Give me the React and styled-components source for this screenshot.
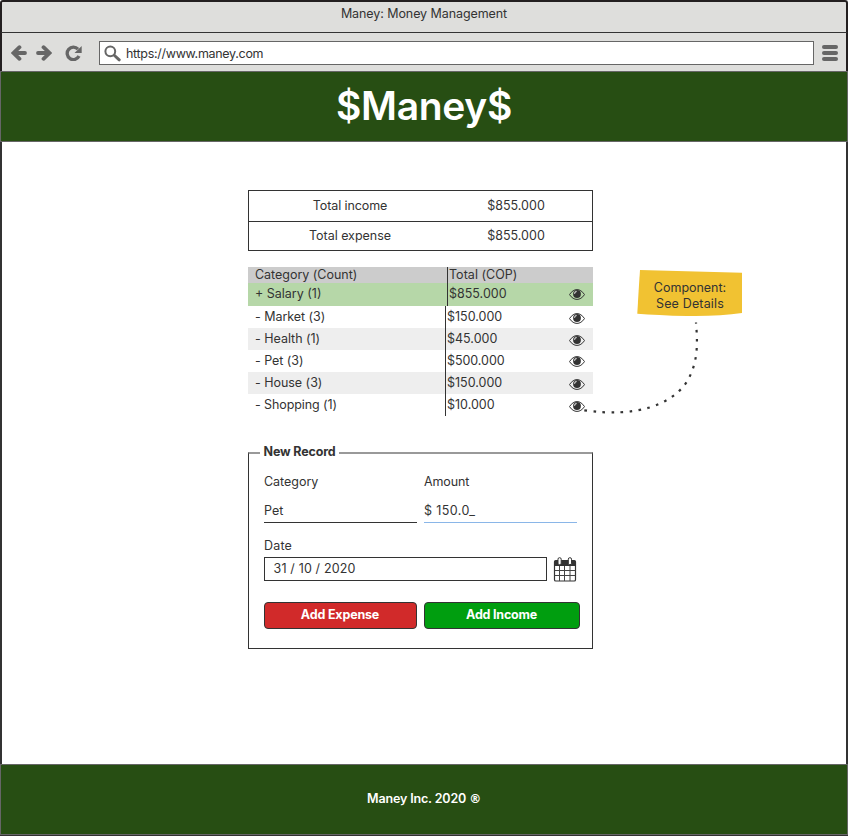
import React from "react";
import styled, { createGlobalStyle } from "styled-components";

const GlobalStyle = createGlobalStyle`
  *, *::before, *::after { box-sizing: border-box; }
  body { margin: 0; background: #fff; }
`;

const Window = styled.div`
  position: relative;
  display: flex;
  flex-direction: column;
  width: 848px;
  height: 836px;
  overflow: hidden;
  background: #fff;
  color: #333;
  font: 400 12.5px/16px Inter, "Open Sans", sans-serif;
`;

const Text = styled.span`
  letter-spacing: ${(p) => p.$ls || 0}px;
  white-space: pre;
`;

const TitleBar = styled.div`
  height: 33px;
  padding-top: 4px;
  text-align: center;
  background: #dededc;
  border: 2px solid #231f20;
  border-bottom: 1px solid #333;
  border-radius: 3px 3px 0 0;
`;

const Toolbar = styled.div`
  display: flex;
  align-items: flex-start;
  height: 38px;
  padding: 8px 7px 0 9px;
  background: #dededc;
  border: solid #231f20;
  border-width: 0 2px;
`;

const NavIcon = styled.svg`
  flex: none;
  width: ${(p) => p.$w}px;
  height: 16px;
  margin: 4px ${(p) => p.$gap}px 0 0;
`;

const AddressBar = styled.div`
  display: flex;
  align-items: center;
  width: 715px;
  height: 24px;
  margin-right: 8px;
  padding: 1px 0 0 4px;
  background: #fff;
  border: 1px solid #666;
`;

const SearchIcon = styled.svg`
  width: 17px;
  height: 17px;
  margin-right: 5px;
`;

const MenuButton = styled.div`
  display: flex;
  flex-direction: column;
  gap: 2px;
  width: 16px;
  padding-top: 4px;
`;

const MenuLine = styled.span`
  height: 4px;
  border-radius: 2px;
  background: #666;
`;

const Header = styled.header`
  height: 71px;
  padding-top: 10px;
  text-align: center;
  color: #fff;
  background: #274e13;
  border: 1px solid #666;
  font-size: 39px;
  font-weight: 600;
  line-height: 48px;
`;

const Main = styled.main`
  flex: 1;
  display: flex;
  flex-direction: column;
  padding: 48px 0 0 246px;
  border: solid #333;
  border-width: 0 2px;
`;

const Totals = styled.div`
  width: 345px;
  border: 1px solid #333;
`;

const TotalsRow = styled.div`
  display: grid;
  grid-template-columns: 202px 130px;
  align-items: center;
  text-align: center;
  height: ${(p) => p.$h}px;
  & + & { border-top: 1px solid #333; }
`;

const Categories = styled.div`
  width: 345px;
  margin-top: 16px;
`;

const CategoryRow = styled.div`
  display: grid;
  grid-template-columns: ${(p) => p.$split}px 1fr 24px;
  height: ${(p) => p.$h}px;
  background: ${(p) => p.$bg};
`;

const NameCell = styled.div`
  padding: ${(p) => p.$top}px 0 0 7px;
`;

const AmountCell = styled.div`
  padding: ${(p) => p.$top}px 0 0 1px;
  border-left: 1px solid #333;
`;

const EyeSvg = styled.svg`
  width: 16px;
  height: 11px;
  margin-top: ${(p) => p.$top}px;
`;

const Form = styled.fieldset`
  width: 345px;
  height: 204px;
  min-width: 0;
  margin: 29px 0 0;
  padding: 13px 12px 0 11px;
  border: 1px solid #333;
  border-top: 2px solid #999;
`;

const Legend = styled.legend`
  height: 16px;
  padding: 0 3px 0 3.5px;
  font-weight: 700;
  line-height: 14px;
`;

const Fields = styled.div`
  display: grid;
  grid-template-columns: 153px 153px;
  column-gap: 7px;
  margin-left: 4px;
`;

const Field = styled.label`
  display: flex;
  flex-direction: column;
  height: 49px;
  gap: 13px;
  border-bottom: 1px solid ${(p) => p.$line};
`;

const DateField = styled.div`
  display: grid;
  grid-template-columns: 283px 24px;
  column-gap: 6px;
  margin: 15px 0 0 4px;
`;

const DateLabel = styled.label`
  grid-column: 1 / -1;
  height: 19px;
`;

const DateInput = styled.div`
  height: 24px;
  padding: 3px 0 0 8.5px;
  border: 1px solid #333;
`;

const CalendarSvg = styled.svg`
  width: 24px;
  height: 25px;
`;

const Actions = styled.div`
  display: grid;
  grid-template-columns: 153px 156px;
  column-gap: 7px;
  margin: 20px 0 0 4px;
`;

const Button = styled.button`
  display: block;
  height: 27px;
  padding: 0 1px 1px 0;
  color: #fff;
  background: ${(p) => p.$bg};
  border: 1px solid #333;
  border-radius: 4px;
  font: 700 12.5px/16px Inter, sans-serif;
`;

const Footer = styled.footer`
  height: 71px;
  padding-top: 26px;
  text-align: center;
  color: #fff;
  background: #274e13;
  border: 1px solid #666;
  font-weight: 600;
`;

const Registered = styled.span`
  font: 700 12px/10px "DejaVu Sans", sans-serif;
`;

const WindowEdge = styled.div`
  height: 1px;
  background: #333;
`;

const Note = styled.aside`
  position: absolute;
  left: 637px;
  top: 269px;
  isolation: isolate;
  width: 106px;
  height: 48px;
  padding-top: 11px;
  display: flex;
  flex-direction: column;
  align-items: center;
`;

const NotePaper = styled.svg`
  position: absolute;
  inset: 0;
  z-index: -1;
`;

const Connector = styled.svg`
  position: absolute;
  left: 580px;
  top: 318px;
`;

const Eye = ({ top }) => (
  <EyeSvg viewBox="0 0 16 11" $top={top}>
    <path d="M.5 5.6C2.8 2.1 5.3.6 8 .6s5.2 1.5 7.5 5C13.200 9 10.700 10.400 8 10.400S2.800 9 .5 5.600Z" fill="none" stroke="#333" strokeWidth="1" />
    <circle cx="8" cy="5" r="3.900" fill="#333" />
    <path d="M5.500 4.700C5.600 3.400 6.400 2.500 7.600 2.300" fill="none" stroke="#ddd" strokeWidth="1.200" />
  </EyeSvg>
);

const Calendar = () => (
  <CalendarSvg viewBox="0 0 24 25">
    <rect x="1.500" y="3.500" width="21" height="20.500" rx="1.300" fill="#fff" stroke="#333" strokeWidth="1.200" />
    <path d="M1.500 9V4.500q0-1 1-1h19q1 0 1 1V9Z" fill="#333" />
    <path d="M6.500 9v15M11.500 9v15M17 9v15M1.500 13.500h21M1.500 18.500h21" stroke="#444" strokeWidth="1" />
    <rect x="5" y=".700" width="3.200" height="7" rx="1.500" fill="#fff" stroke="#333" />
    <rect x="15.300" y=".700" width="3.200" height="7" rx="1.500" fill="#fff" stroke="#333" />
  </CalendarSvg>
);

const ROWS = [
  { name: "Category (Count)", nls: -0.02, amount: "Total (COP)", als: 0.03, h: 16, split: 199, bg: "#ccc", top: 0 },
  { name: "+ Salary (1)", nls: 0, amount: "$855.000", als: 0, h: 23, split: 199, bg: "#b6d7a8", top: 3, eye: 6 },
  { name: "- Market (3)", nls: -0.04, amount: "$150.000", als: 0, h: 22, split: 197, bg: "#fff", top: 3, eye: 7 },
  { name: "- Health (1)", nls: -0.02, amount: "$45.000", als: 0, h: 22, split: 197, bg: "#eee", top: 3, eye: 7 },
  { name: "- Pet (3)", nls: -0.04, amount: "$500.000", als: -0.06, h: 22, split: 197, bg: "#fff", top: 3, eye: 6 },
  { name: "- House (3)", nls: -0.03, amount: "$150.000", als: 0, h: 22, split: 197, bg: "#eee", top: 3, eye: 7 },
  { name: "- Shopping (1)", nls: -0.1, amount: "$10.000", als: 0, h: 22, split: 197, bg: "#fff", top: 3, eye: 7 },
];

export default function App() {
  return (
    <>
      <GlobalStyle />
      <Window>
        <TitleBar><Text $ls={-0.08}>Maney: Money Management</Text></TitleBar>
        <Toolbar>
          <NavIcon viewBox="0 0 16 16" $w={16} $gap={9}>
            <path d="M14 8H3M8.500 2.200 2.500 8l6 5.800" fill="none" stroke="#666" strokeWidth="3.800" strokeLinecap="round" strokeLinejoin="miter" />
          </NavIcon>
          <NavIcon viewBox="0 0 16 16" $w={16} $gap={13}>
            <path d="M2 8h11M7.500 2.200l6 5.800-6 5.800" fill="none" stroke="#666" strokeWidth="3.800" strokeLinecap="round" strokeLinejoin="miter" />
          </NavIcon>
          <NavIcon viewBox="0 0 17 16" $w={17} $gap={17}>
            <path d="M13 4.200A6.200 6.200 0 1 0 14 11" fill="none" stroke="#666" strokeWidth="3.300" />
            <path d="M16.700 1v7H9.500Z" fill="#666" />
          </NavIcon>
          <AddressBar>
            <SearchIcon viewBox="0 0 17 17">
              <circle cx="6.300" cy="6.300" r="4.900" fill="none" stroke="#666" strokeWidth="2" />
              <path d="m10.500 10.500 4.700 4.300" stroke="#666" strokeWidth="3" strokeLinecap="round" />
            </SearchIcon>
            <Text $ls={-0.3}>https://www.maney.com</Text>
          </AddressBar>
          <MenuButton><MenuLine /><MenuLine /><MenuLine /></MenuButton>
        </Toolbar>
        <Header><Text $ls={-0.3}>$Maney$</Text></Header>
        <Main>
          <Totals>
            <TotalsRow $h={30}>
              <Text $ls={-0.1}>Total income</Text>
              <Text $ls={0}>$855.000</Text>
            </TotalsRow>
            <TotalsRow $h={29}>
              <Text $ls={-0.02}>Total expense</Text>
              <Text $ls={0}>$855.000</Text>
            </TotalsRow>
          </Totals>
          <Categories>
            {ROWS.map((r) => (
              <CategoryRow key={r.name} $h={r.h} $split={r.split} $bg={r.bg}>
                <NameCell $top={r.top}><Text $ls={r.nls}>{r.name}</Text></NameCell>
                <AmountCell $top={r.top}><Text $ls={r.als}>{r.amount}</Text></AmountCell>
                {r.eye && <Eye top={r.eye} />}
              </CategoryRow>
            ))}
          </Categories>
          <Form>
            <Legend><Text $ls={-0.15}>New Record</Text></Legend>
            <Fields>
              <Field $line="#333">
                <Text $ls={-0.03}>Category</Text>
                <Text>Pet</Text>
              </Field>
              <Field $line="#8ab6e8">
                <Text $ls={-0.1}>Amount</Text>
                <Text $ls={0.4}>$ 150.0_</Text>
              </Field>
            </Fields>
            <DateField>
              <DateLabel><Text $ls={0.2}>Date</Text></DateLabel>
              <DateInput><Text $ls={0.16}>31 / 10 / 2020</Text></DateInput>
              <Calendar />
            </DateField>
            <Actions>
              <Button $bg="#d12a2a"><Text $ls={-0.17}>Add Expense</Text></Button>
              <Button $bg="#009e0f"><Text $ls={-0.2}>Add Income</Text></Button>
            </Actions>
          </Form>
        </Main>
        <Footer><Text $ls={-0.15}>Maney Inc. 2020 <Registered>®</Registered></Text></Footer>
        <WindowEdge />
        <Note>
          <NotePaper width="106" height="48" viewBox="0 0 106 48">
            <path d="M3 1 105 3.700V44Q82 47.500 50 47 20 46.300 .3 44.700 1.500 22 3 1Z" fill="#f1c232" />
          </NotePaper>
          <Text $ls={-0.02}>Component:</Text>
          <Text $ls={0.16}>See Details</Text>
        </Note>
        <Connector width="130" height="100" viewBox="580 318 130 100">
          <path d="M584.300 410.300C638 418 670 404 685 384.500 699 364 697.500 342 696 322.500" fill="none" stroke="#333" strokeWidth="2.200" strokeDasharray="2.600 6.450" />
        </Connector>
      </Window>
    </>
  );
}
